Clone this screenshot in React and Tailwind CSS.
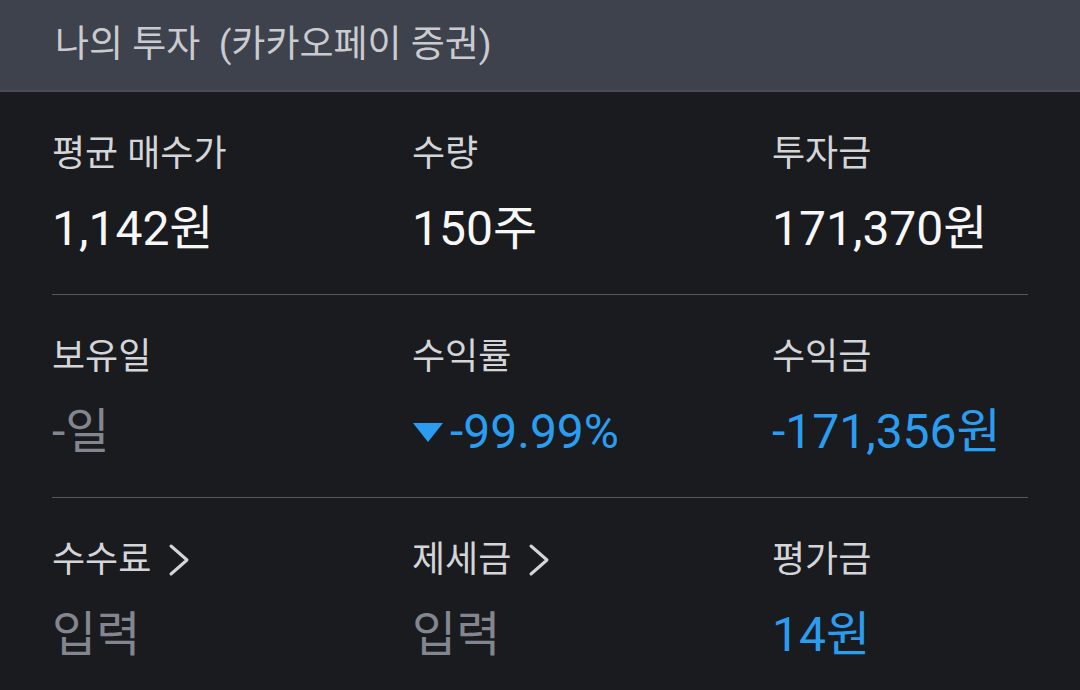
import React from 'react';

const FONT = { fontFamily: 'Roboto, "Noto Sans CJK KR", sans-serif' };

function Chevron() {
    return (
        <svg width="22" height="34" viewBox="0 0 22 34" className="ml-[17px] inline-block">
            <polyline points="3,3 19,17 3,31" fill="none" stroke="#d4d5d8" strokeWidth="3" strokeLinecap="round" strokeLinejoin="round" />
        </svg>
    );
}

function Down() {
    return (
        <svg width="32" height="22" viewBox="0 0 32 22" className="mr-[6px] inline-block">
            <polygon points="1,2 31,2 16,21" fill="#2b9df0" />
        </svg>
    );
}

function Cell({ label, value, tone = 'white', arrow, down }) {
    const toneClass = {
        white: 'text-[#f7f7f8]',
        gray: 'text-[#83868e]',
        blue: 'text-[#2b9df0]',
    }[tone];
    return (
        <div className="flex flex-col">
            <div className="flex items-center h-[44px] text-[36px] leading-[44px] text-[#d4d5d8]">
                {label}
                {arrow && <Chevron />}
            </div>
            <div className={`flex items-center mt-[25px] h-[56px] text-[48px] leading-[56px] ${toneClass}`}>
                {down && <Down />}
                {value}
            </div>
        </div>
    );
}

const rows = [
    [
        { label: '평균 매수가', value: '1,142원' },
        { label: '수량', value: '150주' },
        { label: '투자금', value: '171,370원' },
    ],
    [
        { label: '보유일', value: '-일', tone: 'gray' },
        { label: '수익률', value: '-99.99%', tone: 'blue', down: true },
        { label: '수익금', value: '-171,356원', tone: 'blue' },
    ],
    [
        { label: '수수료', value: '입력', tone: 'gray', arrow: true },
        { label: '제세금', value: '입력', tone: 'gray', arrow: true },
        { label: '평가금', value: '14원', tone: 'blue' },
    ],
];

export default function App() {
    return (
        <div className="w-[1080px] h-[690px] bg-[#1a1b1f] overflow-hidden" style={FONT}>
            {/* Header */}
            <div className="h-[92px] bg-[#3e424c] border-b-2 border-[#484c56] flex items-center px-[55px]">
                <span className="text-[37px] text-[#c9cbd0] whitespace-pre">나의 투자  (카카오페이 증권)</span>
            </div>

            <div className="px-[52px]">
                {rows.map((row, i) => (
                    <div
                        key={i}
                        className={`grid grid-cols-[360px_360px_1fr] pt-[40px] pb-[37px] ${i < rows.length - 1 ? 'border-b border-[#56585e]' : ''}`}
                    >
                        {row.map((c) => (
                            <Cell key={c.label} {...c} />
                        ))}
                    </div>
                ))}
            </div>
        </div>
    );
}
